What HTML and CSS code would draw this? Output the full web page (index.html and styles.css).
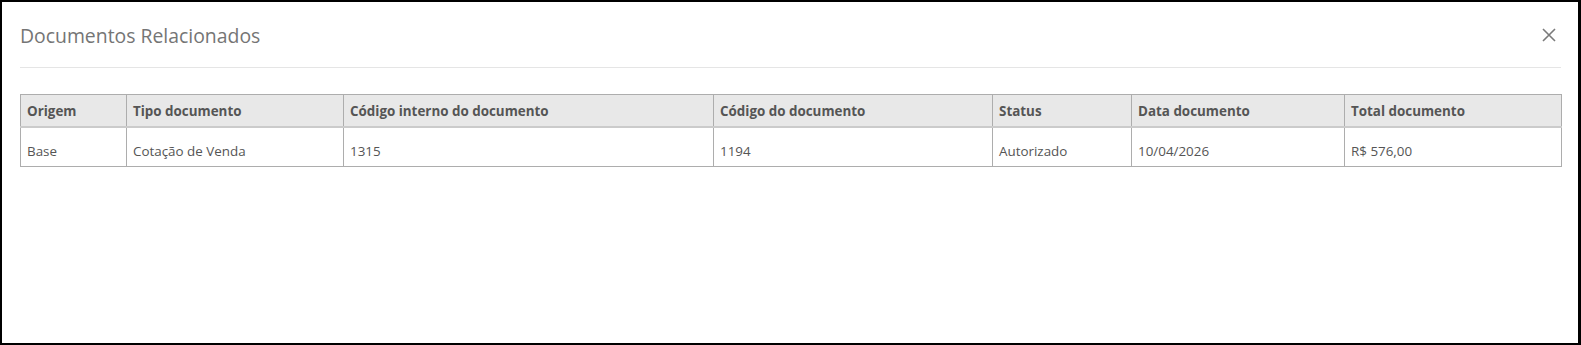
FILE: index.html
```html
<!DOCTYPE html>
<html lang="pt-BR">
<head>
    <meta charset="UTF-8">
    <title>Documentos Relacionados</title>
    <link rel="stylesheet" href="styles.css">
</head>
<body>
    <div class="modal">
        <div class="modal-header">
            <h4 class="modal-title">Documentos Relacionados</h4>
            <button class="close" type="button" aria-label="Fechar">
                <svg width="14" height="14" viewBox="0 0 14 14">
                    <path d="M1 1 L13 13 M13 1 L1 13" stroke="#7a7a7a" stroke-width="1.6" fill="none"/>
                </svg>
            </button>
        </div>
        <div class="modal-body">
            <table class="docs-table">
                <colgroup>
                    <col class="c-origem">
                    <col class="c-tipo">
                    <col class="c-interno">
                    <col class="c-codigo">
                    <col class="c-status">
                    <col class="c-data">
                    <col class="c-total">
                </colgroup>
                <thead>
                    <tr>
                        <th>Origem</th>
                        <th>Tipo documento</th>
                        <th>Código interno do documento</th>
                        <th>Código do documento</th>
                        <th>Status</th>
                        <th>Data documento</th>
                        <th>Total documento</th>
                    </tr>
                </thead>
                <tbody>
                    <tr>
                        <td>Base</td>
                        <td>Cotação de Venda</td>
                        <td>1315</td>
                        <td>1194</td>
                        <td>Autorizado</td>
                        <td>10/04/2026</td>
                        <td>R$ 576,00</td>
                    </tr>
                </tbody>
            </table>
        </div>
    </div>
</body>
</html>
```

FILE: styles.css
```css
body {
    margin: 0;
    padding: 0;
    background: #fff;
    font-family: "Open Sans", "Noto Sans", sans-serif;
}
.modal {
    height: 345px;
    box-sizing: border-box;
    border: 2px solid #000;
    border-right-width: 3px;
    padding: 0 17px 0 18px;
}
.modal-header {
    display: flex;
    align-items: center;
    justify-content: space-between;
    height: 64px;
    padding-top: 1px;
    border-bottom: 1px solid #e5e5e5;
}
.modal-title {
    margin: 0;
    font-size: 19.4px;
    font-weight: normal;
    color: #757575;
}
.close {
    background: none;
    border: none;
    padding: 0;
    margin-right: 5px;
    width: 14px;
    height: 14px;
    display: flex;
    cursor: pointer;
}
.modal-body {
    padding-top: 26px;
}
.docs-table {
    width: 100%;
    border-collapse: collapse;
    table-layout: fixed;
    font-size: 13.4px;
    color: #555;
    text-align: left;
}
.docs-table th, .docs-table td {
    border: 1px solid #adadad;
    padding: 0 6px;
}
.docs-table th {
    height: 31px;
    background: #e8e8e8;
    font-weight: bold;
    border-bottom: 2px solid #cbcbcb;
}
.docs-table td {
    height: 30px;
    padding-top: 8px;
}
.c-origem { width: 106px; }
.c-tipo { width: 217px; }
.c-interno { width: 370px; }
.c-codigo { width: 279px; }
.c-status { width: 139px; }
.c-data { width: 213px; }
.c-total { width: 217px; }
```
